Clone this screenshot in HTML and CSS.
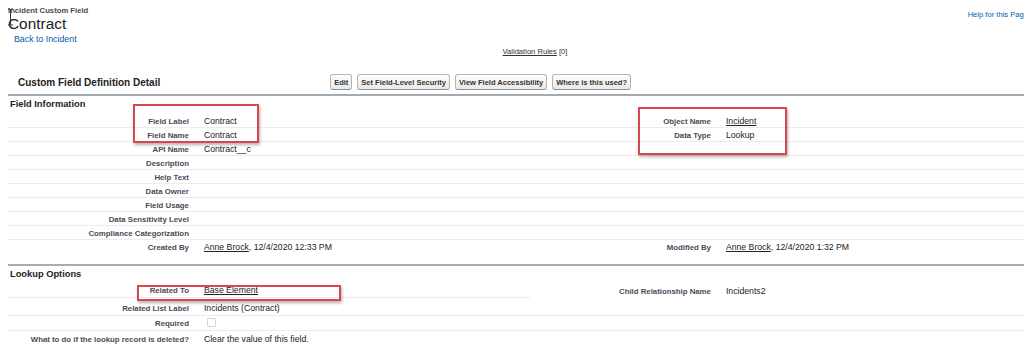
FILE: index.html
```html
<!DOCTYPE html>
<html lang="en">
<head>
    <meta charset="UTF-8">
    <meta name="viewport" content="width=device-width, initial-scale=1.0">
    <title>Contract - Incident Custom Field</title>
    <link rel="stylesheet" href="styles.css">
</head>
<body>
    <div class="page">
        <!-- page title -->
        <div class="pt-header">
            <div class="pt-titles">
                <div class="pt-type">Incident Custom Field</div>
                <h1>Contract</h1>
                <a class="back-link" href="#">Back to Incident</a>
            </div>
            <a class="help-link" href="#">Help for this Page</a>
        </div>
        <div class="rel-links"><a href="#">Validation Rules</a> [0]</div>

        <div class="block">
            <div class="pb-header">
                <h2>Custom Field Definition Detail</h2>
                <div class="pb-buttons">
                    <button class="btn">Edit</button>
                    <button class="btn">Set Field-Level Security</button>
                    <button class="btn">View Field Accessibility</button>
                    <button class="btn">Where is this used?</button>
                </div>
            </div>

            <div class="section">
                <h3>Field Information</h3>
                <div class="detail">
                    <div class="lbl">Field Label</div><div class="val">Contract</div>
                    <div class="lbl">Object Name</div><div class="val"><a href="#">Incident</a></div>

                    <div class="lbl">Field Name</div><div class="val">Contract</div>
                    <div class="lbl">Data Type</div><div class="val">Lookup</div>

                    <div class="lbl">API Name</div><div class="val">Contract__c</div>
                    <div class="lbl"></div><div class="val"></div>

                    <div class="lbl">Description</div><div class="val"></div>
                    <div class="lbl"></div><div class="val"></div>

                    <div class="lbl">Help Text</div><div class="val"></div>
                    <div class="lbl"></div><div class="val"></div>

                    <div class="lbl">Data Owner</div><div class="val"></div>
                    <div class="lbl"></div><div class="val"></div>

                    <div class="lbl">Field Usage</div><div class="val"></div>
                    <div class="lbl"></div><div class="val"></div>

                    <div class="lbl">Data Sensitivity Level</div><div class="val"></div>
                    <div class="lbl"></div><div class="val"></div>

                    <div class="lbl">Compliance Categorization</div><div class="val"></div>
                    <div class="lbl"></div><div class="val"></div>

                    <div class="lbl last">Created By</div><div class="val last"><a href="#">Anne Brock</a>, 12/4/2020 12:33 PM</div>
                    <div class="lbl last">Modified By</div><div class="val last"><a href="#">Anne Brock</a>, 12/4/2020 1:32 PM</div>
                </div>
            </div>

            <div class="section lookup">
                <h3>Lookup Options</h3>
                <div class="detail">
                    <div class="lbl">Related To</div><div class="val"><a href="#">Base Element</a></div>
                    <div class="lbl last">Child Relationship Name</div><div class="val last">Incidents2</div>

                    <div class="lbl">Related List Label</div><div class="val">Incidents (Contract)</div>
                    <div class="lbl"></div><div class="val"></div>

                    <div class="lbl">Required</div><div class="val"><span class="checkbox"></span></div>
                    <div class="lbl"></div><div class="val"></div>

                    <div class="lbl last">What to do if the lookup record is deleted?</div><div class="val last">Clear the value of this field.</div>
                    <div class="lbl last"></div><div class="val last"></div>
                </div>
            </div>
        </div>

        <!-- annotation boxes drawn over the screenshot -->
        <div class="mark mark-field"></div>
        <div class="mark mark-object"></div>
        <div class="mark mark-related"></div>

        <!-- text cursor left over the title -->
        <svg class="cursor" width="7" height="18" viewBox="0 0 7 18">
            <path d="M1 1h2l0.5 0.6l0.5 -0.6h2M3.5 1.6v14.8M1 17h2l0.5 -0.6l0.5 0.6h2" fill="none" stroke="#333" stroke-width="1"/>
        </svg>
    </div>
</body>
</html>
```

FILE: styles.css
```css
* {
    box-sizing: border-box;
    margin: 0;
    padding: 0;
}

html, body {
    overflow: hidden;
}

body {
    font-family: "Liberation Sans", Arial, sans-serif;
    background-color: #fff;
    color: #222;
}

.page {
    position: relative;
    width: 1044px;
    margin-left: 8px;
}

a {
    color: #222;
}

/* title area */
.pt-header {
    display: flex;
    justify-content: space-between;
    padding-top: 6px;
}

.pt-type {
    font-size: 7.7px;
    font-weight: bold;
    line-height: 10px;
    color: #4a4a56;
}

h1 {
    font-size: 15.4px;
    font-weight: normal;
    line-height: 16px;
    color: #222;
}

.back-link {
    display: block;
    margin: 1px 0 0 6px;
    font-size: 8.8px;
    line-height: 12px;
    color: #015ba7;
    text-decoration: none;
}

.help-link {
    margin: 3px 24px 0 0;
    font-size: 7.6px;
    line-height: 12px;
    color: #015ba7;
    text-decoration: none;
    white-space: nowrap;
}

.rel-links {
    margin-top: 1px;
    padding-left: 10px;
    text-align: center;
    font-size: 7.6px;
    line-height: 12px;
    color: #333;
}

.rel-links a {
    color: #333;
}

/* block header */
.pb-header {
    display: flex;
    align-items: center;
    height: 26px;
    margin-top: 12px;
    border-bottom: 2px solid #a2aab3;
}

.pb-header h2 {
    width: 30%;
    padding-left: 10px;
    font-size: 10px;
    font-weight: bold;
    color: #222;
}

.pb-buttons {
    display: flex;
    gap: 5px;
    padding-left: 9px;
}

.btn {
    height: 16px;
    padding: 0 3px;
    font-family: "Liberation Sans", Arial, sans-serif;
    font-size: 7.5px;
    font-weight: bold;
    color: #333;
    background: linear-gradient(#fdfdfd, #e9e9e9);
    border: 1px solid #b5b5b5;
    border-bottom-color: #8f8f8f;
    border-radius: 3px;
}

/* sections */
.section h3 {
    height: 18px;
    padding-left: 2px;
    font-size: 9.3px;
    font-weight: bold;
    line-height: 16px;
    color: #222;
}

.lookup {
    margin-top: 10px;
    border-top: 2px solid #a7adb3;
}

.lookup h3 {
    height: 17px;
}

.detail {
    display: grid;
    grid-template-columns: 18% 32% 18% 32%;
}

.lbl,
.val {
    height: 14px;
    line-height: 15px;
    border-bottom: 1px solid #ececec;
    white-space: nowrap;
}

.lbl {
    padding-right: 7px;
    text-align: right;
    font-size: 7.8px;
    font-weight: bold;
    color: #4a4a56;
}

.val {
    padding-left: 8px;
    font-size: 8.7px;
    color: #222;
}

.lookup .lbl,
.lookup .val {
    height: 15px;
}

.lbl.last,
.val.last {
    border-bottom: none;
}

.lookup .lbl.last,
.lookup .val.last {
    height: 18px;
    padding-top: 1px;
}

.checkbox {
    display: inline-block;
    width: 9px;
    height: 9px;
    margin: 2px 0 0 3px;
    border: 1px solid #d4d4d4;
    border-radius: 1px;
}

/* red annotation boxes */
.mark {
    position: absolute;
    border: 2px solid #d8474c;
    box-shadow: 1px 2px 3px rgba(0, 0, 0, 0.3);
}

.mark-field {
    left: 125px;
    top: 104px;
    width: 126px;
    height: 39px;
}

.mark-object {
    left: 630px;
    top: 107px;
    width: 149px;
    height: 48px;
}

.mark-related {
    left: 129px;
    top: 285px;
    width: 204px;
    height: 16px;
}

.cursor {
    position: absolute;
    left: -1px;
    top: 8px;
}
```
